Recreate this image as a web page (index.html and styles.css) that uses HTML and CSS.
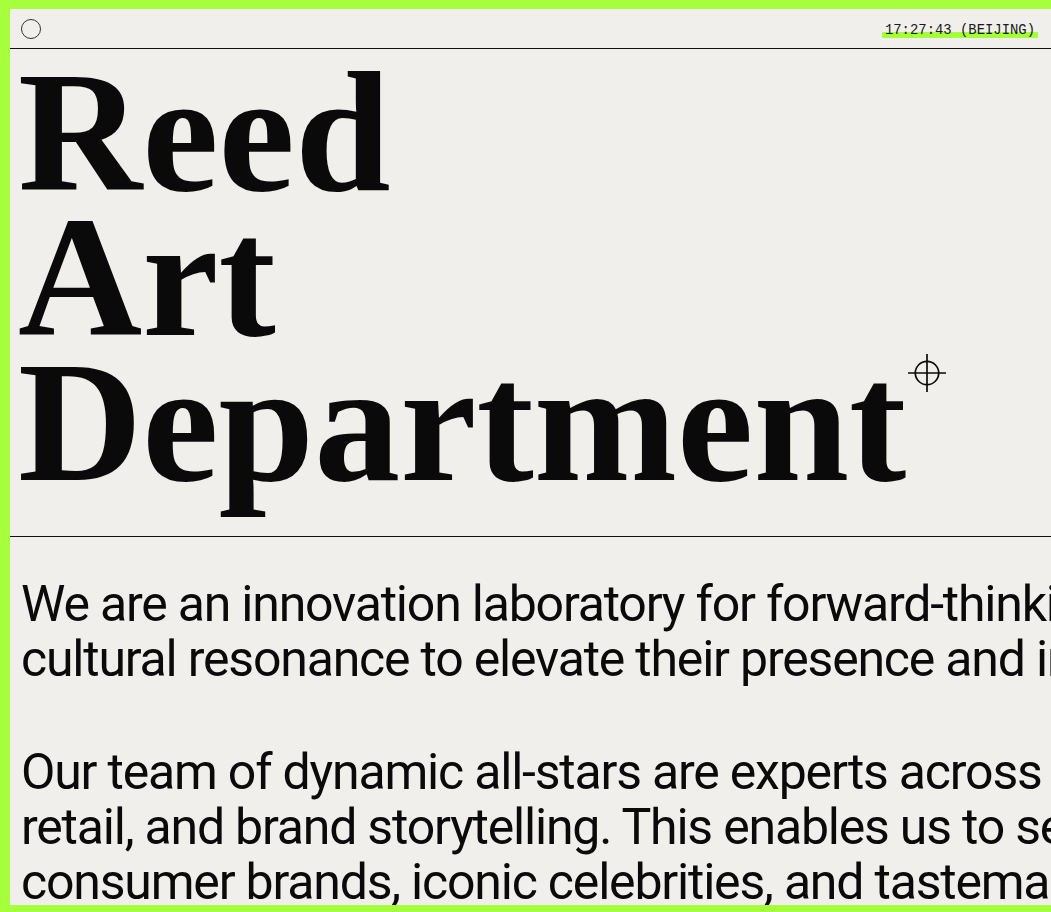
FILE: index.html
```html
<!DOCTYPE html>
<html lang="en">
<head>
<meta charset="utf-8">
<title>Reed Art Department</title>
<link rel="stylesheet" href="styles.css">
</head>
<body>
<div class="frame">
  <header class="topbar">
    <span class="dot"></span>
    <span class="clock">17:27:43 (BEIJING)</span>
  </header>
  <section class="hero">
    <h1 class="title">Reed<br>Art<br>Department<svg class="mark" width="40" height="40" viewBox="0 0 40 40" aria-hidden="true"><circle cx="20" cy="20" r="11.7" fill="none" stroke="#0a0a0a" stroke-width="1.7"/><line x1="1" y1="20" x2="39" y2="20" stroke="#0a0a0a" stroke-width="1.7"/><line x1="20" y1="1" x2="20" y2="39" stroke="#0a0a0a" stroke-width="1.7"/></svg></h1>
  </section>
  <section class="about">
    <p class="lead">We are an innovation laboratory for forward-thinking brands, using<br>cultural resonance to elevate their presence and impact.</p>
    <p class="lead">Our team of dynamic all-stars are experts across design, culture,<br>retail, and brand storytelling. This enables us to seamlessly connect<br>consumer brands, iconic celebrities, and tastemakers.</p>
  </section>
</div>
</body>
</html>
```

FILE: styles.css
```css
html, body {
  margin: 0;
  padding: 0;
}
body {
  background: #a6ff3c;
  overflow: hidden;
  height: 912px;
}
.frame {
  margin: 9px 0 0 10px;
  height: 896px;
  background: #f0efeb;
  color: #0a0a0a;
  overflow: hidden;
}
.topbar {
  height: 39px;
  border-bottom: 1px solid #111;
  display: flex;
  align-items: center;
  justify-content: space-between;
  padding: 0 13px 0 11px;
  box-sizing: content-box;
}
.dot {
  width: 18px;
  height: 18px;
  border: 1.5px solid #333;
  border-radius: 50%;
  margin-top: 1px;
}
.clock {
  font-family: "Liberation Mono", monospace;
  font-size: 13.9px;
  line-height: 16px;
  padding: 0 3px;
  margin-top: 2px;
  color: #1a1a1a;
  background: linear-gradient(to bottom, transparent 0, transparent 62%, #a6ff3c 62%, #a6ff3c 100%);
}
.hero {
  border-bottom: 1px solid #111;
  padding: 11px 0 41px 8px;
}
.title {
  margin: 0;
  font-family: "Liberation Serif", serif;
  font-weight: 700;
  font-size: 172px;
  line-height: 145px;
  letter-spacing: 0;
  white-space: nowrap;
}
.mark {
  vertical-align: 87px;
  margin-left: 1px;
}
.about {
  padding: 40px 0 0 11px;
}
.lead {
  margin: 0 0 58px;
  font-family: Roboto, "Liberation Sans", sans-serif;
  font-size: 50px;
  line-height: 55px;
  letter-spacing: -1.2px;
  white-space: nowrap;
}
```
